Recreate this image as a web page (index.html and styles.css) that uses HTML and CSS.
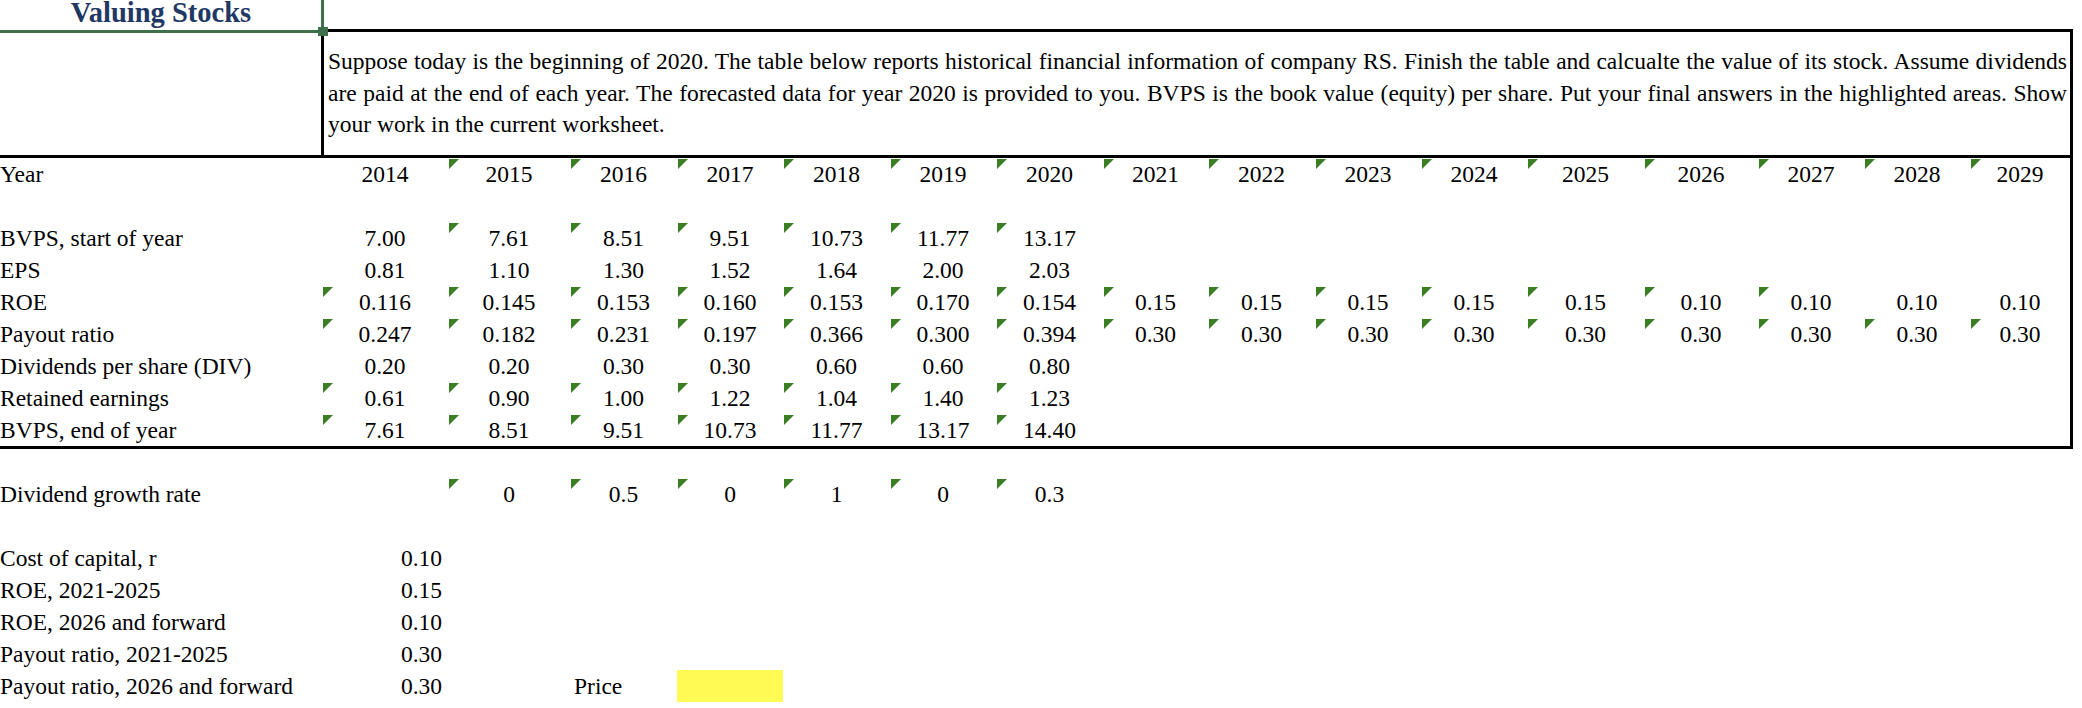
FILE: index.html
```html
<!DOCTYPE html>
<html>
<head>
<meta charset="utf-8">
<title>Valuing Stocks</title>
<link rel="stylesheet" href="styles.css">
</head>
<body>
<div class="sheet">
  <div class="title-row">
    <div class="title-cell">Valuing Stocks
      <span class="sel-h"></span><span class="sel-v"></span><span class="sel-handle"></span>
    </div>
  </div>
  <div class="note-row">
    <div class="note-spacer"></div>
    <div class="note">
      <div class="jl">Suppose today is the beginning of 2020. The table below reports historical financial information of company RS. Finish the table and calcualte the value of its stock. Assume dividends</div>
      <div class="jl">are paid at the end of each year. The forecasted data for year 2020 is provided to you. BVPS is the book value (equity) per share. Put your final answers in the highlighted areas. Show</div>
      <div>your work in the current worksheet.</div>
    </div>
  </div>
  <div class="table">
    <div class="row">
      <div class="lbl">Year</div>
      <div class="c">2014</div><div class="c t">2015</div><div class="c t">2016</div><div class="c t">2017</div><div class="c t">2018</div><div class="c t">2019</div><div class="c t">2020</div><div class="c t">2021</div><div class="c t">2022</div><div class="c t">2023</div><div class="c t">2024</div><div class="c t">2025</div><div class="c t">2026</div><div class="c t">2027</div><div class="c t">2028</div><div class="c t">2029</div>
    </div>
    <div class="row"></div>
    <div class="row">
      <div class="lbl">BVPS, start of year</div>
      <div class="c">7.00</div><div class="c t">7.61</div><div class="c t">8.51</div><div class="c t">9.51</div><div class="c t">10.73</div><div class="c t">11.77</div><div class="c t">13.17</div>
    </div>
    <div class="row">
      <div class="lbl">EPS</div>
      <div class="c">0.81</div><div class="c">1.10</div><div class="c">1.30</div><div class="c">1.52</div><div class="c">1.64</div><div class="c">2.00</div><div class="c">2.03</div>
    </div>
    <div class="row">
      <div class="lbl">ROE</div>
      <div class="c t">0.116</div><div class="c t">0.145</div><div class="c t">0.153</div><div class="c t">0.160</div><div class="c t">0.153</div><div class="c t">0.170</div><div class="c t">0.154</div><div class="c t">0.15</div><div class="c t">0.15</div><div class="c t">0.15</div><div class="c t">0.15</div><div class="c t">0.15</div><div class="c t">0.10</div><div class="c t">0.10</div><div class="c">0.10</div><div class="c">0.10</div>
    </div>
    <div class="row">
      <div class="lbl">Payout ratio</div>
      <div class="c t">0.247</div><div class="c t">0.182</div><div class="c t">0.231</div><div class="c t">0.197</div><div class="c t">0.366</div><div class="c t">0.300</div><div class="c t">0.394</div><div class="c t">0.30</div><div class="c t">0.30</div><div class="c t">0.30</div><div class="c t">0.30</div><div class="c t">0.30</div><div class="c t">0.30</div><div class="c t">0.30</div><div class="c t">0.30</div><div class="c t">0.30</div>
    </div>
    <div class="row">
      <div class="lbl">Dividends per share (DIV)</div>
      <div class="c">0.20</div><div class="c">0.20</div><div class="c">0.30</div><div class="c">0.30</div><div class="c">0.60</div><div class="c">0.60</div><div class="c">0.80</div>
    </div>
    <div class="row">
      <div class="lbl">Retained earnings</div>
      <div class="c t">0.61</div><div class="c t">0.90</div><div class="c t">1.00</div><div class="c t">1.22</div><div class="c t">1.04</div><div class="c t">1.40</div><div class="c t">1.23</div>
    </div>
    <div class="row">
      <div class="lbl">BVPS, end of year</div>
      <div class="c t">7.61</div><div class="c t">8.51</div><div class="c t">9.51</div><div class="c t">10.73</div><div class="c t">11.77</div><div class="c t">13.17</div><div class="c t">14.40</div>
    </div>
  </div>
  <div class="gap29"></div>
  <div class="row">
    <div class="lbl">Dividend growth rate</div>
    <div></div><div class="c t">0</div><div class="c t">0.5</div><div class="c t">0</div><div class="c t">1</div><div class="c t">0</div><div class="c t">0.3</div>
  </div>
  <div class="row"></div>
  <div class="row">
    <div class="lbl">Cost of capital, r</div><div class="r">0.10</div>
  </div>
  <div class="row">
    <div class="lbl">ROE, 2021-2025</div><div class="r">0.15</div>
  </div>
  <div class="row">
    <div class="lbl">ROE, 2026 and forward</div><div class="r">0.10</div>
  </div>
  <div class="row">
    <div class="lbl">Payout ratio, 2021-2025</div><div class="r">0.30</div>
  </div>
  <div class="row">
    <div class="lbl">Payout ratio, 2026 and forward</div><div class="r">0.30</div>
    <div></div><div class="price">Price</div><div class="hl"></div>
  </div>
</div>
</body>
</html>
```
FILE: styles.css
```css
body {
  margin: 0;
  background: #ffffff;
  font-family: "Liberation Serif", "Times New Roman", serif;
  font-size: 23.5px;
  color: #000000;
}

.sheet {
  width: 2073px;
}

.title-row {
  display: flex;
  height: 29px;
}

.title-cell {
  position: relative;
  width: 322px;
  height: 29px;
  text-align: center;
  font-weight: bold;
  font-size: 28.5px;
  line-height: 26px;
  color: #1f3864;
}

.sel-h {
  position: absolute;
  left: 0;
  top: 30px;
  width: 318px;
  height: 3px;
  background: #3e7049;
}

.sel-v {
  position: absolute;
  left: 321px;
  top: 0;
  width: 3px;
  height: 27px;
  background: #3e7049;
}

.sel-handle {
  position: absolute;
  left: 318px;
  top: 27px;
  width: 10px;
  height: 9px;
  background: #3e7049;
  z-index: 2;
}

.note-row {
  display: flex;
  height: 129px;
  box-sizing: border-box;
  border-bottom: 3px solid #000;
}

.note-spacer {
  flex: none;
  width: 321px;
}

.note {
  flex: 1;
  min-width: 0;
  border: 3px solid #000;
  border-bottom: none;
  padding: 0 3px 0 4px;
  display: flex;
  flex-direction: column;
  justify-content: center;
  line-height: 31.5px;
}

.jl {
  text-align: justify;
  text-align-last: justify;
  white-space: nowrap;
}

.table {
  width: 2073px;
  box-sizing: border-box;
  border-right: 3px solid #000;
  border-bottom: 3px solid #000;
}

.row {
  display: grid;
  grid-template-columns: 322px 126px 122px 107px 106px 107px 106px 107px 105px 107px 106px 106px 117px 114px 106px 106px 100px;
  height: 32px;
  line-height: 32px;
}

.row > div {
  position: relative;
  white-space: nowrap;
}

.c {
  text-align: center;
}

.r {
  text-align: right;
  padding-right: 6px;
}

.t::before {
  content: "";
  position: absolute;
  left: 1px;
  top: 1px;
  border-top: 10px solid #3b7d22;
  border-right: 10px solid transparent;
}

.gap29 {
  height: 29px;
}

.price {
  padding-left: 4px;
}

.hl {
  background: #fffb54;
}
```
